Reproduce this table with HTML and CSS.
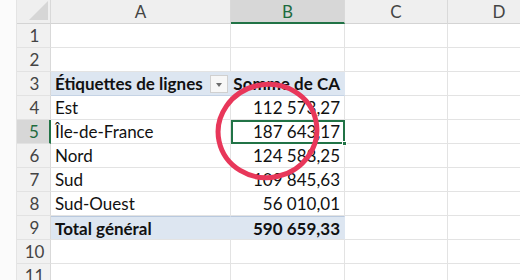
FILE: index.html
```html
<!DOCTYPE html>
<html lang="fr">
<head>
<meta charset="utf-8">
<link rel="stylesheet" href="styles.css">
</head>
<body>
<div class="app">
  <div class="gutter"></div>
  <div class="sheet">
    <div class="corner"><span class="tri"></span></div>
    <div class="colh">A</div>
    <div class="colh sel">B</div>
    <div class="colh">C</div>
    <div class="colh">D</div>

    <div class="rowh">1</div><div class="c"></div><div class="c"></div><div class="c"></div><div class="c"></div>
    <div class="rowh">2</div><div class="c"></div><div class="c"></div><div class="c"></div><div class="c"></div>

    <div class="rowh">3</div>
    <div class="c pv hd lbl">Étiquettes de lignes <span class="dd"></span></div>
    <div class="c pv hd num">Somme de CA</div>
    <div class="c"></div><div class="c"></div>

    <div class="rowh">4</div><div class="c lbl">Est</div><div class="c num">112 573,27</div><div class="c"></div><div class="c"></div>
    <div class="rowh act">5</div><div class="c lbl">Île-de-France</div><div class="c num active">187 643,17<span class="handle"></span></div><div class="c"></div><div class="c"></div>
    <div class="rowh">6</div><div class="c lbl">Nord</div><div class="c num">124 588,25</div><div class="c"></div><div class="c"></div>
    <div class="rowh">7</div><div class="c lbl">Sud</div><div class="c num">109 845,63</div><div class="c"></div><div class="c"></div>
    <div class="rowh">8</div><div class="c lbl">Sud-Ouest</div><div class="c num">56 010,01</div><div class="c"></div><div class="c"></div>

    <div class="rowh">9</div>
    <div class="c pv tot lbl">Total général</div>
    <div class="c pv tot num">590 659,33</div>
    <div class="c"></div><div class="c"></div>

    <div class="rowh">10</div><div class="c"></div><div class="c"></div><div class="c"></div><div class="c"></div>
    <div class="rowh">11</div><div class="c"></div><div class="c"></div><div class="c"></div><div class="c"></div>
  </div>
  <svg class="mark" width="520" height="280" viewBox="0 0 520 280">
    <ellipse cx="267.5" cy="131" rx="49.5" ry="46.5" transform="rotate(-12 267.5 131)" fill="none" stroke="#e8375a" stroke-width="5"/>
  </svg>
</div>
</body>
</html>
```
FILE: styles.css
```css
* { box-sizing: border-box; }
html, body { margin: 0; padding: 0; background: #ffffff; }
body { font-family: Lato, "Open Sans", sans-serif; overflow: hidden; }

.app {
  position: relative;
  width: 520px;
  height: 280px;
  display: flex;
  overflow: hidden;
}

.gutter {
  width: 17px;
  flex: none;
  background: #fbfbfb;
  border-right: 1px solid #e4e4e4;
}

.sheet {
  display: grid;
  grid-template-columns: 34px 180px 114px 103px 103px;
  grid-auto-rows: 24px;
  flex: none;
}

.corner {
  position: relative;
  background: #efefef;
  border-right: 1px solid #d9d9d9;
  border-bottom: 1px solid #d4d4d4;
}
.tri {
  position: absolute;
  right: 2px;
  bottom: 3px;
  width: 0;
  height: 0;
  border-left: 19px solid transparent;
  border-bottom: 19px solid #d6d6d6;
}

.colh {
  background: #efefef;
  border-right: 1px solid #d9d9d9;
  border-bottom: 1px solid #d4d4d4;
  color: #444;
  font-size: 17px;
  display: flex;
  align-items: center;
  justify-content: center;
}
.colh.sel {
  background: #d7d7d7;
  color: #1e6b3e;
  border-bottom: 2px solid #217346;
}

.rowh {
  background: #f1f1f1;
  border-right: 1px solid #d9d9d9;
  border-bottom: 1px solid #e2e2e2;
  color: #444;
  font-size: 17px;
  display: flex;
  align-items: center;
  justify-content: center;
  padding-left: 2px;
}
.rowh.act {
  background: #d7d7d7;
  color: #1e6b3e;
  border-right: 2px solid #217346;
}

.c {
  border-right: 1px solid #e3e3e3;
  border-bottom: 1px solid #e3e3e3;
  font-size: 17px;
  color: #111;
  display: flex;
  align-items: center;
  white-space: nowrap;
  position: relative;
}
.lbl { padding-left: 4px; }
.num { justify-content: flex-end; padding-right: 4px; }

.pv { background: #dde6f1; border-right-color: #dde6f1; }
.hd { font-weight: 700; border-bottom: 1px solid #c5d3e5; }
.tot { font-weight: 700; border-top: 1px solid #b9c9de; }

.dd {
  position: absolute;
  right: 2px;
  top: 3px;
  width: 18px;
  height: 18px;
  background: #f7f7f7;
  border: 1px solid #d0d0d0;
}
.dd::after {
  content: "";
  position: absolute;
  left: 5px;
  top: 7px;
  border-left: 3.5px solid transparent;
  border-right: 3.5px solid transparent;
  border-top: 4px solid #6d6d6d;
}

.active {
  outline: 2px solid #217346;
  outline-offset: -2px;
}
.handle {
  position: absolute;
  right: -3px;
  bottom: -3px;
  width: 5px;
  height: 5px;
  background: #217346;
  border: 1px solid #fff;
  z-index: 2;
}

.mark {
  position: absolute;
  left: 0;
  top: 0;
  pointer-events: none;
}
```
